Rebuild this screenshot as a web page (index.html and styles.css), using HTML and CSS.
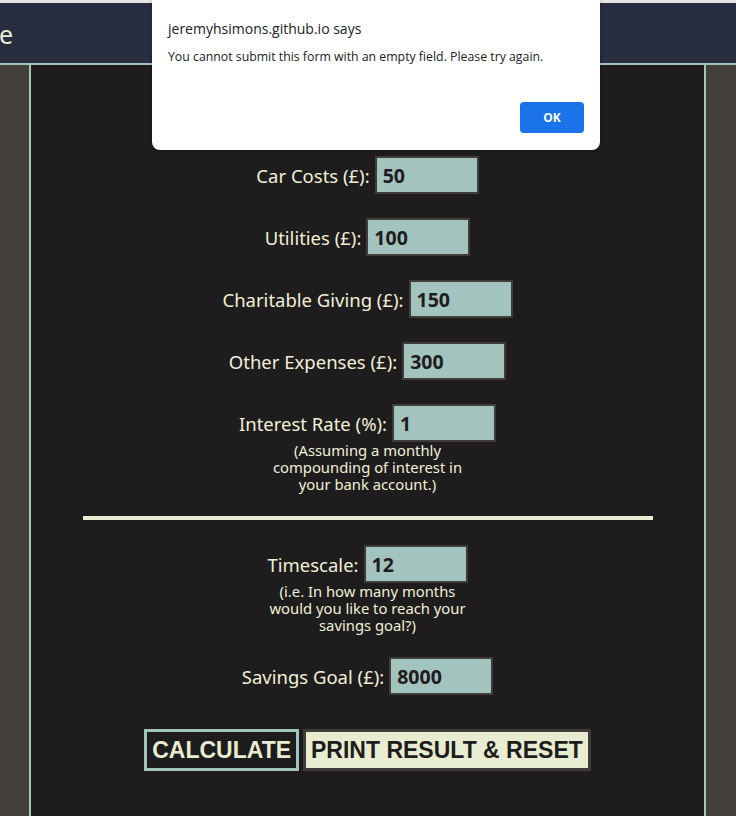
FILE: index.html
```html
<!DOCTYPE html>
<html>
<head>
<meta charset="utf-8">
<link rel="stylesheet" href="styles.css">
</head>
<body>
<div class="topstrip"></div>
<header class="header"><span class="title">e</span></header>
<main class="page">
  <form class="panel">
    <div class="row"><label>Car Costs (£):</label><input value="50"></div>
    <div class="row"><label>Utilities (£):</label><input value="100"></div>
    <div class="row"><label>Charitable Giving (£):</label><input value="150"></div>
    <div class="row"><label>Other Expenses (£):</label><input value="300"></div>
    <div class="row tight"><label>Interest Rate (%):</label><input value="1"></div>
    <p class="note">(Assuming a monthly compounding of interest in your bank account.)</p>
    <hr class="divider">
    <div class="row tight"><label>Timescale:</label><input value="12"></div>
    <p class="note note-last">(i.e. In how many months would you like to reach your savings goal?)</p>
    <div class="row"><label>Savings Goal (£):</label><input value="8000"></div>
    <div class="buttons">
      <button type="button" class="btn calc">CALCULATE</button>
      <button type="button" class="btn print">PRINT RESULT &amp; RESET</button>
    </div>
  </form>
</main>
<div class="dialog">
  <div class="dlg-title">jeremyhsimons.github.io says</div>
  <div class="dlg-msg">You cannot submit this form with an empty field. Please try again.</div>
  <div class="dlg-actions"><button type="button" class="dlg-ok">OK</button></div>
</div>
</body>
</html>
```
FILE: styles.css
```css
html, body {
  margin: 0;
  padding: 0;
  background: #433f3b;
  height: 816px;
  overflow: hidden;
}
.topstrip {
  height: 3px;
  background: #e6e6e6;
}
.header {
  height: 60px;
  background: #282d40;
  border-bottom: 2px solid #a3c3bf;
  display: flex;
  align-items: center;
}
.title {
  font-family: "Noto Sans", sans-serif;
  font-size: 25px;
  color: #e8ecd0;
  margin-left: -1px;
  padding-top: 2px;
}
.page {
  padding: 0 30px 0 29px;
}
.panel {
  background: #1e1c1d;
  border-left: 2px solid #a3c3bf;
  border-right: 2px solid #a3c3bf;
  height: 751px;
  padding-top: 91px;
  display: flex;
  flex-direction: column;
  align-items: center;
  font-family: "Noto Sans", sans-serif;
  color: #f0f0d8;
}
.row {
  display: flex;
  align-items: center;
  gap: 5px;
  margin-bottom: 24px;
}
.row.tight {
  margin-bottom: 0;
}
.row label {
  font-size: 18.5px;
}
.row input {
  width: 104px;
  height: 38px;
  box-sizing: border-box;
  background: #a3c3bf;
  border: 2px solid #3f3c3a;
  padding: 0 6px;
  font-family: "Noto Sans", sans-serif;
  font-weight: bold;
  font-size: 19.5px;
  color: #1e1c1d;
  outline: none;
}
.note {
  margin: 0 0 23px;
  width: 200px;
  text-align: center;
  font-size: 14.8px;
  line-height: 17px;
}
.note.note-last {
  margin-bottom: 23px;
}
.divider {
  width: 570px;
  height: 4px;
  border: none;
  background: #e8ecd0;
  margin: 0 0 25px;
}
.buttons {
  margin-top: 10px;
  display: flex;
  gap: 4px;
}
.btn {
  height: 42px;
  box-sizing: border-box;
  font-family: "Liberation Sans", Arial, sans-serif;
  font-weight: bold;
  font-size: 23px;
  padding: 0 5px;
  cursor: pointer;
}
.calc {
  background: #1e1c1d;
  color: #e8ecd0;
  border: 3px solid #a3c3bf;
}
.print {
  background: #e8ecd0;
  color: #1e1c1d;
  border: 3px solid #3f3c3a;
}
.dialog {
  position: absolute;
  left: 152px;
  top: 0;
  width: 448px;
  height: 150px;
  box-sizing: border-box;
  background: #ffffff;
  border-radius: 0 0 8px 8px;
  box-shadow: 0 1px 4px rgba(0,0,0,0.25);
  padding: 20px 16px 0 16px;
  font-family: "Open Sans", "Noto Sans", sans-serif;
  color: #202124;
}
.dlg-title {
  font-size: 14px;
  line-height: 18px;
}
.dlg-msg {
  font-size: 12.3px;
  line-height: 16px;
  margin-top: 11px;
}
.dlg-actions {
  display: flex;
  justify-content: flex-end;
  margin-top: 37px;
}
.dlg-ok {
  width: 64px;
  height: 31px;
  border: none;
  border-radius: 4px;
  background: #1a73e8;
  color: #ffffff;
  font-family: "Open Sans", "Noto Sans", sans-serif;
  font-weight: bold;
  font-size: 12px;
}
```
